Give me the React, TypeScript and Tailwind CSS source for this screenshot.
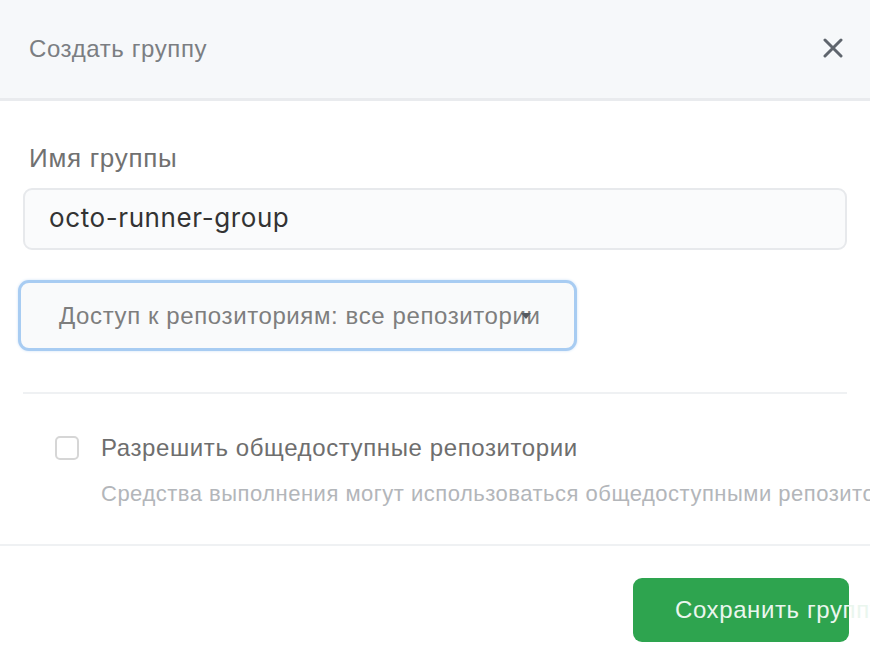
export default function App() {
  return (
    <div className="w-[870px] h-[662px] overflow-hidden bg-white font-[family-name:Liberation_Sans,Arial,sans-serif]">
      {/* Header */}
      <div className="h-[101px] bg-[#f6f8fa] border-b-[3px] border-[#e9ebee] flex items-center justify-between pl-[29px] pr-[27px]">
        <h2 className="text-[24px] leading-[30px] tracking-[0.6px] text-[#7b7e82] pb-[1px]">Создать группу</h2>
        <svg width="20" height="20" viewBox="0 0 20 20" className="mb-[2px]">
          <path d="M2 2 L18 18 M18 2 L2 18" stroke="#5f656d" strokeWidth="3" strokeLinecap="round" />
        </svg>
      </div>

      {/* Body */}
      <div className="px-[23px] pt-[42px]">
        <label className="block pl-[6px] text-[26px] leading-[30px] tracking-[0.7px] text-[#717171]">Имя группы</label>
        <div className="mt-[15px] h-[62px] rounded-[9px] border-2 border-[#e7e9ec] bg-[#fafbfc] flex items-center pl-[24px] pb-[3px]">
          <span className="font-[family-name:Inter,sans-serif] text-[26px] text-[#333333] tracking-[0.6px]">octo-runner-group</span>
        </div>

        <div className="mt-[30px] ml-[-5px] w-[559px] h-[71px] rounded-[11px] border-[3px] border-[#a8ccf2] shadow-[0_0_3px_#cfe2f7] bg-[#f9fafb] relative flex items-center pl-[38px]">
          <span className="text-[24px] tracking-[0.6px] text-[#7e7e7e] whitespace-nowrap">Доступ к репозиториям: все репозитории</span>
          <svg width="10" height="6" viewBox="0 0 10 6" className="absolute left-[500px] top-[30px]">
            <path d="M0 0 L10 0 L5 6 Z" fill="#555a60" />
          </svg>
        </div>

        <div className="mt-[41px] h-[2px] bg-[#eff1f3]" />

        <div className="mt-[39px] flex items-center pl-[32px]">
          <div className="w-[24px] h-[24px] rounded-[5px] border-2 border-[#d6d6d6] bg-white shrink-0" />
          <span className="ml-[22px] text-[24px] leading-[30px] tracking-[0.6px] text-[#6e6e6e] whitespace-nowrap">
            Разрешить общедоступные репозитории
          </span>
        </div>
        <div className="mt-[16px] pl-[78px] text-[22px] leading-[30px] tracking-[0.5px] text-[#b3b6ba] whitespace-nowrap">
          Средства выполнения могут использоваться общедоступными репозиториями
        </div>
      </div>

      <div className="mt-[35px] h-[2px] bg-[#eff1f3]" />

      {/* Footer */}
      <div className="flex pl-[633px] pt-[32px]">
        <button className="w-[216px] h-[64px] shrink-0 rounded-[9px] bg-[#2ea44f] flex items-center pl-[42px] text-[24px] tracking-[0.6px] text-[#eaf6ee] whitespace-nowrap overflow-visible">
          Сохранить группу
        </button>
      </div>
    </div>
  )
}
